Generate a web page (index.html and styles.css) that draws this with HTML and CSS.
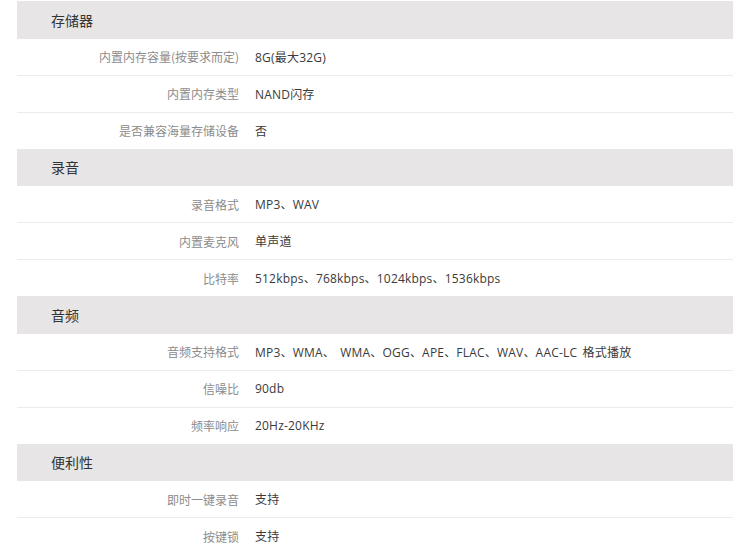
FILE: index.html
```html
<!DOCTYPE html>
<html lang="zh-CN">
<head>
<meta charset="utf-8">
<link rel="stylesheet" href="styles.css">
</head>
<body>
<div class="spec">
  <section class="group">
    <div class="group-title">存储器</div>
    <div class="row"><div class="label">内置内存容量(按要求而定)</div><div class="value">8G(最大32G)</div></div>
    <div class="row"><div class="label">内置内存类型</div><div class="value">NAND闪存</div></div>
    <div class="row"><div class="label">是否兼容海量存储设备</div><div class="value">否</div></div>
  </section>
  <section class="group">
    <div class="group-title">录音</div>
    <div class="row"><div class="label">录音格式</div><div class="value">MP3、WAV</div></div>
    <div class="row"><div class="label">内置麦克风</div><div class="value">单声道</div></div>
    <div class="row"><div class="label">比特率</div><div class="value">512kbps、768kbps、1024kbps、1536kbps</div></div>
  </section>
  <section class="group">
    <div class="group-title">音频</div>
    <div class="row"><div class="label">音频支持格式</div><div class="value">MP3、WMA、 WMA、OGG、APE、FLAC、WAV、AAC-LC 格式播放</div></div>
    <div class="row"><div class="label">信噪比</div><div class="value">90db</div></div>
    <div class="row"><div class="label">频率响应</div><div class="value">20Hz-20KHz</div></div>
  </section>
  <section class="group">
    <div class="group-title">便利性</div>
    <div class="row"><div class="label">即时一键录音</div><div class="value">支持</div></div>
    <div class="row"><div class="label">按键锁</div><div class="value">支持</div></div>
  </section>
</div>
</body>
</html>
```

FILE: styles.css
```css
html, body {
  margin: 0;
  padding: 0;
  background: #ffffff;
}
body {
  font-family: "Open Sans", "Noto Sans CJK SC", sans-serif;
  font-size: 12px;
  color: #333333;
}
.spec {
  width: 716px;
  margin: 1px 0 0 17px;
  display: flex;
  flex-direction: column;
}
.group {
  display: flex;
  flex-direction: column;
}
.group-title {
  height: 37.5px;
  display: flex;
  align-items: center;
  padding-left: 34px;
  background: #e7e5e5;
  font-family: "Noto Sans CJK SC", sans-serif;
  font-size: 14px;
  color: #333333;
}
.row {
  height: 36px;
  display: flex;
  align-items: center;
  gap: 16px;
}
.row + .row {
  border-top: 1px solid #ebebeb;
}
.label {
  width: 222px;
  text-align: right;
  color: #8c8c8c;
  font-family: "Noto Sans CJK SC", sans-serif;
}
.value {
  color: #3a3a3a;
  letter-spacing: 0.2px;
  word-spacing: 2px;
}
```
